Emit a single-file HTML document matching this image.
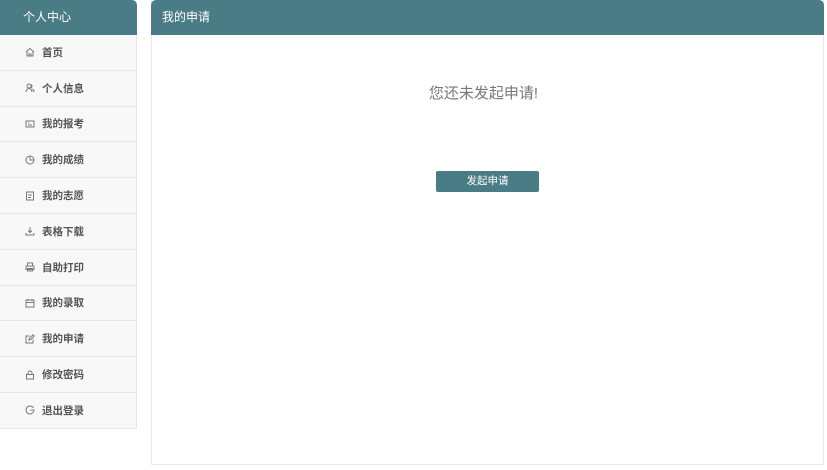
<!DOCTYPE html>
<html><head><meta charset="utf-8"><style>
*{box-sizing:border-box;margin:0;padding:0}
body{width:827px;height:470px;background:#fff;font-family:"Liberation Sans","Noto Sans CJK SC",sans-serif;position:relative;overflow:hidden}
.side{position:absolute;left:0;top:0;width:137px}
.sh{height:35px;background:#4a7c85;color:#fff;font-size:12px;line-height:35px;padding-left:23px;border-radius:0 5px 0 0}
.it{height:35.8px;border-bottom:1px solid #e6e6e6;background:#f8f8f8;border-right:1px solid #e6e6e6;display:flex;align-items:center;padding-left:25px;font-size:10.5px;font-weight:bold;color:#555}
.it svg{width:10px;height:10px;margin-right:7px;fill:none;stroke:#777;stroke-width:1}
.main{position:absolute;left:151px;top:0;width:673px;height:465px;border:1px solid #e8e8e8;border-top:none}
.mh{height:35px;background:#4a7c85;color:#fff;font-size:12px;line-height:35px;padding-left:11px;border-radius:5px 5px 0 0;margin:0 -1px}
.msg{position:absolute;left:0;right:8px;top:82px;text-align:center;font-size:15px;color:#777}
.btn{position:absolute;left:284px;top:171px;width:103px;height:21px;background:#4a7c85;color:#fff;font-size:10.5px;line-height:21px;text-align:center;border-radius:2px}
</style></head><body>
<div class="side">
<div class="sh">个人中心</div>
<div class="it"><svg viewBox="0 0 10 10"><path d="M1 5L5 1.5 9 5M2 4.5V9h6V4.5M4 9V7h2v2"/></svg>首页</div>
<div class="it"><svg viewBox="0 0 10 10"><circle cx="4" cy="3" r="2"/><path d="M1 9c0-2 1.5-3.5 3-3.5S7 7 7 9M6 1.5a2 2 0 010 3.5M7.5 6c1 .7 1.5 1.8 1.5 3"/></svg>个人信息</div>
<div class="it"><svg viewBox="0 0 10 10"><rect x="1" y="2" width="8" height="6"/><path d="M3 6h4M3 4h1"/></svg>我的报考</div>
<div class="it"><svg viewBox="0 0 10 10"><circle cx="5" cy="5" r="4"/><path d="M5 1v4h4"/></svg>我的成绩</div>
<div class="it"><svg viewBox="0 0 10 10"><rect x="1.5" y="1" width="7" height="8"/><path d="M3 4h4M3 6.5h3"/></svg>我的志愿</div>
<div class="it"><svg viewBox="0 0 10 10"><path d="M5 1v5.5M3 4.5l2 2 2-2M1 7v2h8V7"/></svg>表格下载</div>
<div class="it"><svg viewBox="0 0 10 10"><path d="M2.5 4V1h5v3M1 4h8v3.5H1zM2.5 6.5H7.5V9h-5z"/></svg>自助打印</div>
<div class="it"><svg viewBox="0 0 10 10"><rect x="1" y="2" width="8" height="7"/><path d="M1 4.5h8M3 1v2M7 1v2"/></svg>我的录取</div>
<div class="it"><svg viewBox="0 0 10 10"><path d="M8 5.5V9H1V2h3.5M4 6l.5-2L8 .8 9.2 2 5.8 5.5z"/></svg>我的申请</div>
<div class="it"><svg viewBox="0 0 10 10"><rect x="1.5" y="4.5" width="7" height="4.5"/><path d="M3 4.5V3a2 2 0 014 0v1.5"/></svg>修改密码</div>
<div class="it"><svg viewBox="0 0 10 10"><path d="M8.5 3A4 4 0 105 9a4 4 0 004-4H5.5"/></svg>退出登录</div>
</div>
<div class="main">
<div class="mh">我的申请</div>
<div class="msg">您还未发起申请!</div>
<div class="btn">发起申请</div>
</div>
</body></html>
